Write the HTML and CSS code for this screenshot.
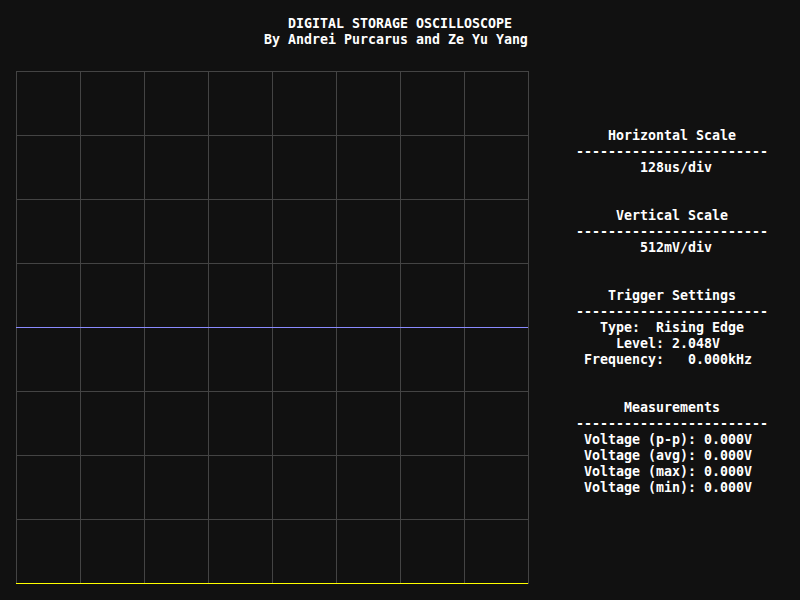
FILE: index.html
```html
<!DOCTYPE html>
<html lang="en">
<head>
<meta charset="utf-8">
<title>Digital Storage Oscilloscope</title>
<link rel="stylesheet" href="styles.css">
</head>
<body>
  <header class="title">
    <div class="row">   DIGITAL STORAGE OSCILLOSCOPE</div>
    <div class="row">By Andrei Purcarus and Ze Yu Yang</div>
  </header>
  <main class="main">
    <svg class="scope" width="513" height="513" viewBox="0 0 513 513" xmlns="http://www.w3.org/2000/svg">
      <path class="grid" d="M0.5 0V513M64.5 0V513M128.5 0V513M192.5 0V513M256.5 0V513M320.5 0V513M384.5 0V513M448.5 0V513M512.5 0V513M0 0.5H513M0 64.5H513M0 128.5H513M0 192.5H513M0 256.5H513M0 320.5H513M0 384.5H513M0 448.5H513"/>
      <path class="trace-b" d="M0 256.5H512"/>
      <path class="trace-a" d="M0 512.5H512"/>
    </svg>
    <aside class="panel">
      <section class="group">
        <div class="row">    Horizontal Scale</div>
        <div class="row">------------------------</div>
        <div class="row">        128us/div</div>
      </section>
      <section class="group">
        <div class="row">     Vertical Scale</div>
        <div class="row">------------------------</div>
        <div class="row">        512mV/div</div>
      </section>
      <section class="group">
        <div class="row">    Trigger Settings</div>
        <div class="row">------------------------</div>
        <div class="row">   Type:  Rising Edge</div>
        <div class="row">     Level: 2.048V</div>
        <div class="row"> Frequency:   0.000kHz</div>
      </section>
      <section class="group">
        <div class="row">      Measurements</div>
        <div class="row">------------------------</div>
        <div class="row"> Voltage (p-p): 0.000V</div>
        <div class="row"> Voltage (avg): 0.000V</div>
        <div class="row"> Voltage (max): 0.000V</div>
        <div class="row"> Voltage (min): 0.000V</div>
      </section>
    </aside>
  </main>
</body>
</html>
```
FILE: styles.css
```css
html, body {
  margin: 0;
  padding: 0;
  background: #111111;
}

body {
  width: 800px;
  height: 600px;
  overflow: hidden;
  color: #ffffff;
  font-family: "DejaVu Sans Mono", "Liberation Mono", monospace;
  font-weight: bold;
  font-size: 13.29px;
  line-height: 16px;
}

.row {
  white-space: pre;
  height: 16px;
}

.title {
  padding: 16px 0 0 264px;
}

.main {
  display: flex;
  align-items: flex-start;
  margin-top: 23px;
}

.scope {
  display: block;
  margin-left: 16px;
  flex: none;
}

.grid {
  stroke: #444444;
  stroke-width: 1;
  fill: none;
}

.trace-b {
  stroke: #8a8aff;
  stroke-width: 1;
}

.trace-a {
  stroke: #ffff00;
  stroke-width: 1;
}

.panel {
  width: 192px;
  margin-left: 47px;
  margin-top: 57px;
  display: flex;
  flex-direction: column;
  gap: 32px;
}
```
